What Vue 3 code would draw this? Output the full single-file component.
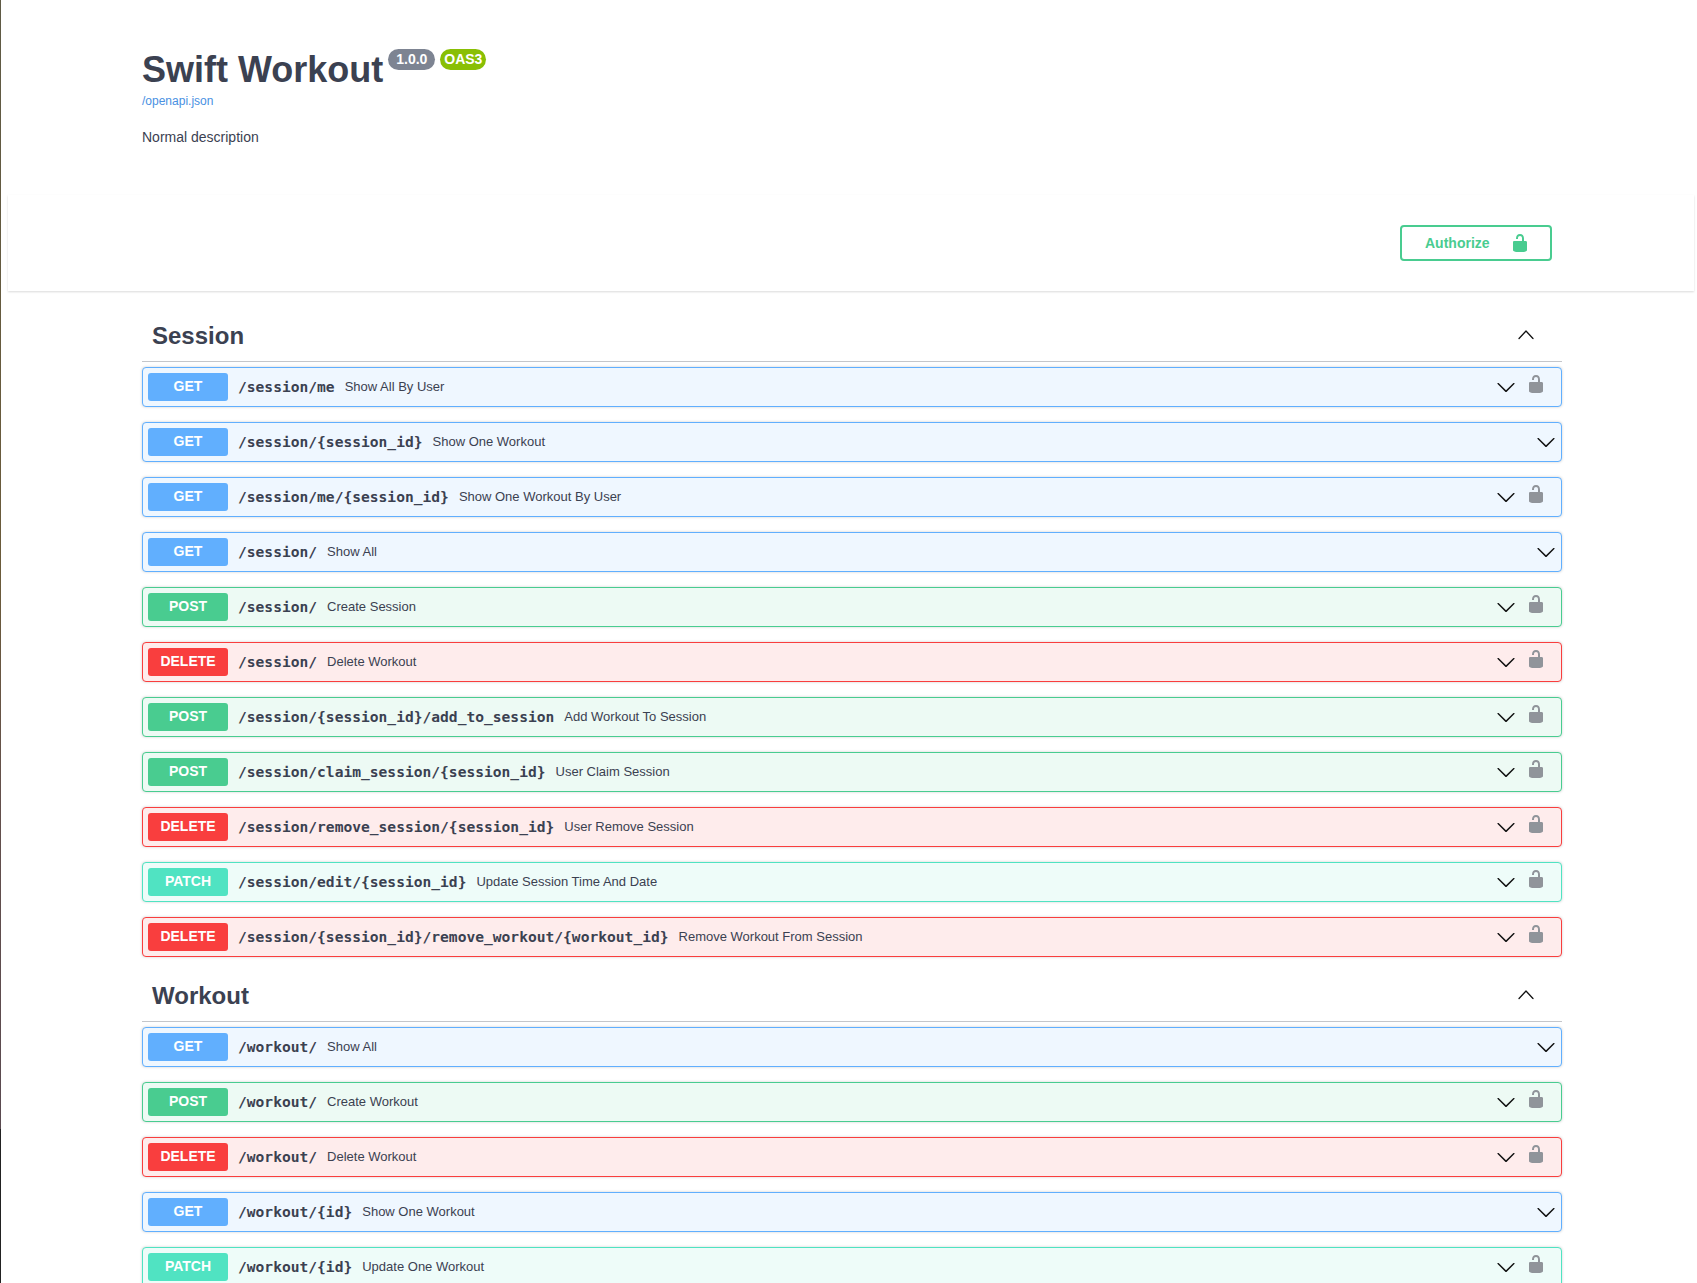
<template>
  <div class="page">
    <div class="edge"></div>

    <section class="info">
      <div class="title-row">
        <h1 class="title">Swift Workout</h1>
        <span class="badge version">1.0.0</span>
        <span class="badge oas">OAS3</span>
      </div>
      <a class="spec-link" href="#">/openapi.json</a>
      <p class="description">Normal description</p>
    </section>

    <section class="scheme">
      <div class="scheme-inner">
        <button class="authorize">
          <span>Authorize</span>
          <svg class="auth-lock" viewBox="0 0 20 20" width="20" height="20">
            <path d="M15.8 8H14V5.6C14 2.703 12.665 1 10 1 7.334 1 6 2.703 6 5.6V6h2v-.801C8 3.754 8.797 3 10 3c1.203 0 2 .754 2 2.199V8H4c-.553 0-1 .646-1 1.199V17c0 .549.428 1.139.951 1.307l1.197.387C5.672 18.861 6.45 19 7 19h6c.55 0 1.327-.139 1.852-.307l1.198-.387c.522-.167.95-.757.95-1.306V9.199C17 8.646 16.352 8 15.8 8z" />
          </svg>
        </button>
      </div>
    </section>

    <main class="wrapper">
      <section v-for="group in groups" :key="group.name" class="group">
        <div class="group-head">
          <h3 class="group-name">{{ group.name }}</h3>
          <svg class="chevron up" viewBox="0 0 20 20" width="20" height="20">
            <path d="M17.418 14.908c-.189.21-.47.282-.71.188a.55.55 0 0 1-.22-.164L10 8.091l-6.488 6.841a.7.7 0 0 1-.93-.024.72.72 0 0 1 0-1.01l6.95-7.326a.65.65 0 0 1 .93 0l6.956 7.326a.72.72 0 0 1 0 1.01z" />
          </svg>
        </div>
        <div
          v-for="op in group.ops"
          :key="op.method + op.path"
          class="op"
          :class="op.method.toLowerCase()"
        >
          <span class="method">{{ op.method }}</span>
          <span class="path">{{ op.path }}</span>
          <span class="summary">{{ op.summary }}</span>
          <svg class="chevron down" viewBox="0 0 20 20" width="20" height="20">
            <path d="M17.418 6.109c.272-.268.709-.268.979 0s.271.701 0 .969l-7.908 7.83c-.27.268-.707.268-.979 0l-7.908-7.83c-.27-.268-.27-.701 0-.969.271-.268.709-.268.979 0L10 13.25l7.418-7.141z" />
          </svg>
          <svg v-if="op.locked" class="op-lock" viewBox="0 0 20 20" width="20" height="20">
            <path d="M15.8 8H14V5.6C14 2.703 12.665 1 10 1 7.334 1 6 2.703 6 5.6V6h2v-.801C8 3.754 8.797 3 10 3c1.203 0 2 .754 2 2.199V8H4c-.553 0-1 .646-1 1.199V17c0 .549.428 1.139.951 1.307l1.197.387C5.672 18.861 6.45 19 7 19h6c.55 0 1.327-.139 1.852-.307l1.198-.387c.522-.167.95-.757.95-1.306V9.199C17 8.646 16.352 8 15.8 8z" />
          </svg>
        </div>
      </section>
    </main>
  </div>
</template>

<script setup>
const groups = [
  {
    name: 'Session',
    ops: [
      { method: 'GET', path: '/session/me', summary: 'Show All By User', locked: true },
      { method: 'GET', path: '/session/{session_id}', summary: 'Show One Workout', locked: false },
      { method: 'GET', path: '/session/me/{session_id}', summary: 'Show One Workout By User', locked: true },
      { method: 'GET', path: '/session/', summary: 'Show All', locked: false },
      { method: 'POST', path: '/session/', summary: 'Create Session', locked: true },
      { method: 'DELETE', path: '/session/', summary: 'Delete Workout', locked: true },
      { method: 'POST', path: '/session/{session_id}/add_to_session', summary: 'Add Workout To Session', locked: true },
      { method: 'POST', path: '/session/claim_session/{session_id}', summary: 'User Claim Session', locked: true },
      { method: 'DELETE', path: '/session/remove_session/{session_id}', summary: 'User Remove Session', locked: true },
      { method: 'PATCH', path: '/session/edit/{session_id}', summary: 'Update Session Time And Date', locked: true },
      { method: 'DELETE', path: '/session/{session_id}/remove_workout/{workout_id}', summary: 'Remove Workout From Session', locked: true }
    ]
  },
  {
    name: 'Workout',
    ops: [
      { method: 'GET', path: '/workout/', summary: 'Show All', locked: false },
      { method: 'POST', path: '/workout/', summary: 'Create Workout', locked: true },
      { method: 'DELETE', path: '/workout/', summary: 'Delete Workout', locked: true },
      { method: 'GET', path: '/workout/{id}', summary: 'Show One Workout', locked: false },
      { method: 'PATCH', path: '/workout/{id}', summary: 'Update One Workout', locked: true }
    ]
  }
]
</script>

<style>
html, body {
  margin: 0;
  height: 1283px;
  overflow: hidden;
  background: #fff;
}
</style>

<style scoped>
.page {
  position: relative;
  height: 1283px;
  overflow: hidden;
  font-family: "Liberation Sans", Arial, sans-serif;
  color: #3b4151;
}

.edge {
  position: absolute;
  left: 0;
  top: 0;
  bottom: 0;
  width: 1px;
  background: linear-gradient(#5f5a45 0%, #6b5b3a 45%, #64504c 62%, #5a4a50 88%, #222 88%, #222 100%);
}

.info {
  height: 195px;
  box-sizing: border-box;
  padding: 49px 0 0 142px;
}

.title-row {
  display: flex;
  align-items: flex-start;
}

.title {
  margin: 0;
  font-size: 36px;
  line-height: 42px;
  font-weight: 700;
}

.badge {
  height: 21px;
  line-height: 21px;
  border-radius: 11px;
  color: #fff;
  font-size: 14px;
  font-weight: 700;
  text-align: center;
  box-sizing: border-box;
}

.version {
  width: 47px;
  margin-left: 5px;
  background: #7d8492;
}

.oas {
  width: 46px;
  margin-left: 5px;
  background: #89bf04;
}

.spec-link {
  display: block;
  margin-top: 2px;
  font-size: 12px;
  line-height: 16px;
  color: #4990e2;
  text-decoration: none;
}

.description {
  margin: 20px 0 0;
  font-size: 14px;
  line-height: 16px;
}

.scheme {
  margin-left: 8px;
  width: 1686px;
  height: 96px;
  box-sizing: border-box;
  background: #fff;
  box-shadow: 0 1px 2px 0 rgba(0, 0, 0, 0.15);
}

.scheme-inner {
  display: flex;
  justify-content: flex-end;
  padding: 30px 142px 0 0;
}

.authorize {
  display: flex;
  align-items: center;
  justify-content: space-between;
  width: 152px;
  height: 36px;
  padding: 0 20px 0 23px;
  box-sizing: border-box;
  background: transparent;
  border: 2px solid #49cc90;
  border-radius: 4px;
  color: #49cc90;
  font-family: inherit;
  font-size: 14px;
  font-weight: 700;
}

.auth-lock {
  fill: #49cc90;
}

.wrapper {
  width: 1420px;
  margin-left: 142px;
  padding-top: 10px;
}

.group-head {
  display: flex;
  align-items: center;
  justify-content: space-between;
  height: 61px;
  box-sizing: border-box;
  padding: 10px 26px 0 10px;
  border-bottom: 1px solid rgba(59, 65, 81, 0.3);
}

.group-head .chevron {
  margin-bottom: 4px;
}

.group-name {
  margin: 0;
  font-size: 24px;
  font-weight: 700;
}

.group-head + .op {
  margin-top: 5px;
}

.op {
  display: flex;
  align-items: center;
  height: 40px;
  margin-bottom: 15px;
  padding: 0 5px;
  box-sizing: border-box;
  border: 1px solid;
  border-radius: 4px;
  box-shadow: 0 0 3px rgba(0, 0, 0, 0.19);
}

.op:last-child {
  margin-bottom: 4px;
}

.method {
  flex: none;
  width: 80px;
  height: 28px;
  line-height: 27px;
  border-radius: 3px;
  color: #fff;
  font-size: 14px;
  font-weight: 700;
  text-align: center;
}

.path {
  margin: 0 0 2px 10px;
  font-family: "DejaVu Sans Mono", monospace;
  font-size: 14.6px;
  font-weight: 700;
  white-space: nowrap;
}

.summary {
  margin: 0 0 2px 10px;
  font-size: 13px;
  color: #3b4151;
  white-space: nowrap;
}

.chevron {
  fill: #111;
}

.op .chevron {
  margin-left: auto;
}

.op-lock {
  fill: #90949a;
  margin: 0 10px 6px;
}

.get {
  background: #eff7ff;
  border-color: #61affe;
}

.get .method {
  background: #61affe;
}

.post {
  background: #edfaf4;
  border-color: #49cc90;
}

.post .method {
  background: #49cc90;
}

.delete {
  background: #feecec;
  border-color: #f93e3e;
}

.delete .method {
  background: #f93e3e;
}

.patch {
  background: #eefcf9;
  border-color: #50e3c2;
}

.patch .method {
  background: #50e3c2;
}
</style>
